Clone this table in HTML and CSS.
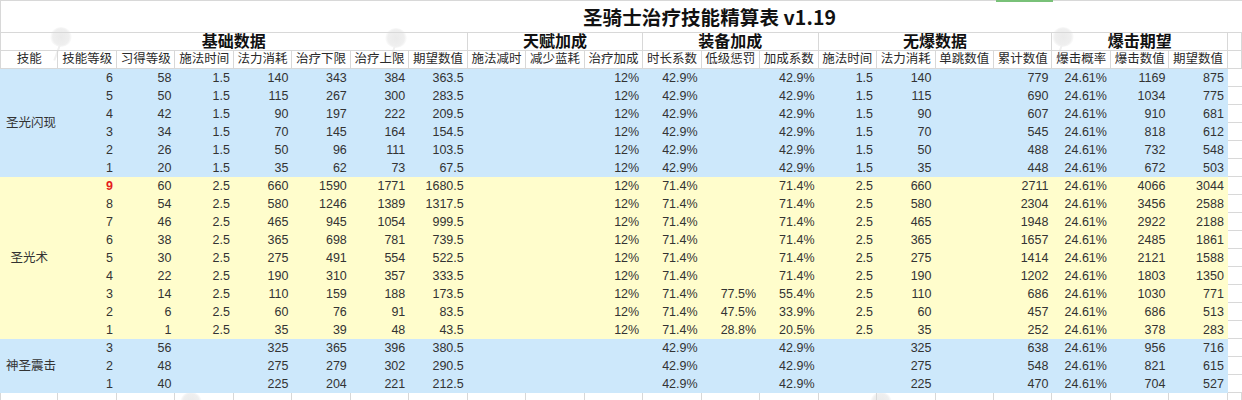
FILE: index.html
```html
<!DOCTYPE html>
<html lang="zh">
<head>
<meta charset="utf-8">
<title>圣骑士治疗技能精算表 v1.19</title>
<link rel="stylesheet" href="styles.css">
</head>
<body>
<div class="sheet">
  <div class="wm wm1"></div>
  <div class="wm wm2"></div>
  <div class="wm wm3"></div>
  <div class="wm wm4"></div>
  <div class="wm wm5"></div>
  <div class="sel"></div>

  <div class="row title">
    <div class="title-cell">圣骑士治疗技能精算表 v1.19</div>
    <div class="x"></div>
  </div>

  <div class="row groups">
    <div class="g8">基础数据</div>
    <div class="g3">天赋加成</div>
    <div class="g3">装备加成</div>
    <div class="g4">无爆数据</div>
    <div class="g3">爆击期望</div>
    <div class="x"></div>
  </div>

  <div class="row heads">
    <div>技能</div><div>技能等级</div><div>习得等级</div><div>施法时间</div><div>法力消耗</div><div>治疗下限</div><div>治疗上限</div><div>期望数值</div>
    <div>施法减时</div><div>减少蓝耗</div><div>治疗加成</div>
    <div>时长系数</div><div>低级惩罚</div><div>加成系数</div>
    <div>施法时间</div><div>法力消耗</div><div>单跳数值</div><div>累计数值</div>
    <div>爆击概率</div><div>爆击数值</div><div>期望数值</div>
    <div class="x"></div>
  </div>

  <div class="band blue">
    <div class="skill s6 left">圣光闪现</div>
    <div>6</div><div>58</div><div>1.5</div><div>140</div><div>343</div><div>384</div><div>363.5</div><div></div><div></div><div>12%</div><div>42.9%</div><div></div><div>42.9%</div><div>1.5</div><div>140</div><div></div><div>779</div><div>24.61%</div><div>1169</div><div>875</div><div class="x"></div>
    <div>5</div><div>50</div><div>1.5</div><div>115</div><div>267</div><div>300</div><div>283.5</div><div></div><div></div><div>12%</div><div>42.9%</div><div></div><div>42.9%</div><div>1.5</div><div>115</div><div></div><div>690</div><div>24.61%</div><div>1034</div><div>775</div><div class="x"></div>
    <div>4</div><div>42</div><div>1.5</div><div>90</div><div>197</div><div>222</div><div>209.5</div><div></div><div></div><div>12%</div><div>42.9%</div><div></div><div>42.9%</div><div>1.5</div><div>90</div><div></div><div>607</div><div>24.61%</div><div>910</div><div>681</div><div class="x"></div>
    <div>3</div><div>34</div><div>1.5</div><div>70</div><div>145</div><div>164</div><div>154.5</div><div></div><div></div><div>12%</div><div>42.9%</div><div></div><div>42.9%</div><div>1.5</div><div>70</div><div></div><div>545</div><div>24.61%</div><div>818</div><div>612</div><div class="x"></div>
    <div>2</div><div>26</div><div>1.5</div><div>50</div><div>96</div><div>111</div><div>103.5</div><div></div><div></div><div>12%</div><div>42.9%</div><div></div><div>42.9%</div><div>1.5</div><div>50</div><div></div><div>488</div><div>24.61%</div><div>732</div><div>548</div><div class="x"></div>
    <div>1</div><div>20</div><div>1.5</div><div>35</div><div>62</div><div>73</div><div>67.5</div><div></div><div></div><div>12%</div><div>42.9%</div><div></div><div>42.9%</div><div>1.5</div><div>35</div><div></div><div>448</div><div>24.61%</div><div>672</div><div>503</div><div class="x"></div>
  </div>

  <div class="band yellow">
    <div class="skill s9">圣光术</div>
    <div class="red">9</div><div>60</div><div>2.5</div><div>660</div><div>1590</div><div>1771</div><div>1680.5</div><div></div><div></div><div>12%</div><div>71.4%</div><div></div><div>71.4%</div><div>2.5</div><div>660</div><div></div><div>2711</div><div>24.61%</div><div>4066</div><div>3044</div><div class="x"></div>
    <div>8</div><div>54</div><div>2.5</div><div>580</div><div>1246</div><div>1389</div><div>1317.5</div><div></div><div></div><div>12%</div><div>71.4%</div><div></div><div>71.4%</div><div>2.5</div><div>580</div><div></div><div>2304</div><div>24.61%</div><div>3456</div><div>2588</div><div class="x"></div>
    <div>7</div><div>46</div><div>2.5</div><div>465</div><div>945</div><div>1054</div><div>999.5</div><div></div><div></div><div>12%</div><div>71.4%</div><div></div><div>71.4%</div><div>2.5</div><div>465</div><div></div><div>1948</div><div>24.61%</div><div>2922</div><div>2188</div><div class="x"></div>
    <div>6</div><div>38</div><div>2.5</div><div>365</div><div>698</div><div>781</div><div>739.5</div><div></div><div></div><div>12%</div><div>71.4%</div><div></div><div>71.4%</div><div>2.5</div><div>365</div><div></div><div>1657</div><div>24.61%</div><div>2485</div><div>1861</div><div class="x"></div>
    <div>5</div><div>30</div><div>2.5</div><div>275</div><div>491</div><div>554</div><div>522.5</div><div></div><div></div><div>12%</div><div>71.4%</div><div></div><div>71.4%</div><div>2.5</div><div>275</div><div></div><div>1414</div><div>24.61%</div><div>2121</div><div>1588</div><div class="x"></div>
    <div>4</div><div>22</div><div>2.5</div><div>190</div><div>310</div><div>357</div><div>333.5</div><div></div><div></div><div>12%</div><div>71.4%</div><div></div><div>71.4%</div><div>2.5</div><div>190</div><div></div><div>1202</div><div>24.61%</div><div>1803</div><div>1350</div><div class="x"></div>
    <div>3</div><div>14</div><div>2.5</div><div>110</div><div>159</div><div>188</div><div>173.5</div><div></div><div></div><div>12%</div><div>71.4%</div><div>77.5%</div><div>55.4%</div><div>2.5</div><div>110</div><div></div><div>686</div><div>24.61%</div><div>1030</div><div>771</div><div class="x"></div>
    <div>2</div><div>6</div><div>2.5</div><div>60</div><div>76</div><div>91</div><div>83.5</div><div></div><div></div><div>12%</div><div>71.4%</div><div>47.5%</div><div>33.9%</div><div>2.5</div><div>60</div><div></div><div>457</div><div>24.61%</div><div>686</div><div>513</div><div class="x"></div>
    <div>1</div><div>1</div><div>2.5</div><div>35</div><div>39</div><div>48</div><div>43.5</div><div></div><div></div><div>12%</div><div>71.4%</div><div>28.8%</div><div>20.5%</div><div>2.5</div><div>35</div><div></div><div>252</div><div>24.61%</div><div>378</div><div>283</div><div class="x"></div>
  </div>

  <div class="band blue">
    <div class="skill s3 left">神圣震击</div>
    <div>3</div><div>56</div><div></div><div>325</div><div>365</div><div>396</div><div>380.5</div><div></div><div></div><div></div><div>42.9%</div><div></div><div>42.9%</div><div></div><div>325</div><div></div><div>638</div><div>24.61%</div><div>956</div><div>716</div><div class="x"></div>
    <div>2</div><div>48</div><div></div><div>275</div><div>279</div><div>302</div><div>290.5</div><div></div><div></div><div></div><div>42.9%</div><div></div><div>42.9%</div><div></div><div>275</div><div></div><div>548</div><div>24.61%</div><div>821</div><div>615</div><div class="x"></div>
    <div>1</div><div>40</div><div></div><div>225</div><div>204</div><div>221</div><div>212.5</div><div></div><div></div><div></div><div>42.9%</div><div></div><div>42.9%</div><div></div><div>225</div><div></div><div>470</div><div>24.61%</div><div>704</div><div>527</div><div class="x"></div>
  </div>

  <div class="row empty">
    <div></div><div></div><div></div><div></div><div></div><div></div><div></div>
    <div></div><div></div><div></div><div></div><div></div><div></div><div></div>
    <div></div><div></div><div></div><div></div><div></div><div></div><div></div>
    <div class="x"></div>
  </div>
</div>
</body>
</html>
```

FILE: styles.css
```css
html, body {
  margin: 0;
  padding: 0;
  background: #ffffff;
}

body {
  font-family: "Liberation Sans", "Noto Sans CJK SC", sans-serif;
  font-size: 12.5px;
  color: #333333;
}

.sheet {
  position: relative;
  width: 1242px;
  height: 400px;
  overflow: hidden;
}

.row,
.band {
  position: relative;
  display: grid;
  grid-template-columns: repeat(21, 58.48px) 13.92px;
  grid-auto-rows: 18px;
}

.row > div {
  box-sizing: border-box;
  border-right: 1px solid #d8d8d8;
  border-bottom: 1px solid #d8d8d8;
}

.row > div:first-child {
  border-left: 1px solid #d8d8d8;
}

/* title row */
.title {
  grid-auto-rows: 33px;
}

.title > div {
  border-top: 1px solid #d8d8d8;
  border-right: none;
}

.title-cell {
  grid-column: span 21;
  display: flex;
  align-items: center;
  padding-left: 582px;
  padding-top: 1px;
  font-family: "Noto Sans CJK SC", sans-serif;
  font-weight: bold;
  font-size: 19.5px;
  line-height: 24px;
  color: #111111;
  letter-spacing: 0.1px;
}

/* group row */
.groups > div {
  display: flex;
  align-items: center;
  justify-content: center;
  font-family: "Liberation Sans", "Noto Sans CJK SC", sans-serif;
  font-weight: bold;
  font-size: 16px;
  line-height: 17px;
  color: #111111;
}

.g8 { grid-column: span 8; }
.g3 { grid-column: span 3; }
.g4 { grid-column: span 4; }

/* header row */
.heads > div {
  display: flex;
  align-items: center;
  justify-content: center;
  font-family: "Liberation Sans", "Noto Sans CJK SC", sans-serif;
  font-size: 12.5px;
  line-height: 15px;
  color: #2a2a2a;
  white-space: nowrap;
}

/* data bands */
.band.blue { background: #cde8fb; }
.band.yellow { background: #fffdcc; }

.band > div {
  display: flex;
  align-items: center;
  justify-content: flex-end;
  padding-right: 4px;
  line-height: 15px;
  white-space: nowrap;
}

.band > .skill {
  justify-content: center;
  padding: 0;
}

.band > .skill.left {
  justify-content: flex-start;
  padding-left: 6px;
}

.s6 { grid-row: span 6; }
.s9 { grid-row: span 9; }
.s3 { grid-row: span 3; }

.band > .x {
  background: #ffffff;
  box-sizing: border-box;
  border-bottom: 1px solid #d8d8d8;
  padding: 0;
}

.red {
  color: #e51c1c;
  font-weight: bold;
}

/* watermark marks */
.wm {
  position: absolute;
  width: 22px;
  height: 20px;
  border-radius: 50%;
  background: radial-gradient(circle, #eaeaea 0%, #efefef 55%, rgba(245,245,245,0) 75%);
}

.wm::after {
  content: "";
  position: absolute;
  left: 6px;
  top: 18px;
  width: 2px;
  height: 16px;
  background: #f0f0f0;
  transform: rotate(20deg);
}

.wm1 { left: 50px; top: 27px; }
.wm2 { left: 385px; top: 28px; }
.wm3 { left: 1052px; top: 27px; }
.wm4 { left: 180px; top: 392px; }
.wm5 { left: 870px; top: 392px; }

.sel {
  position: absolute;
  left: 996px;
  top: 0;
  width: 57px;
  height: 2px;
  background: #79c178;
  z-index: 5;
}
```
